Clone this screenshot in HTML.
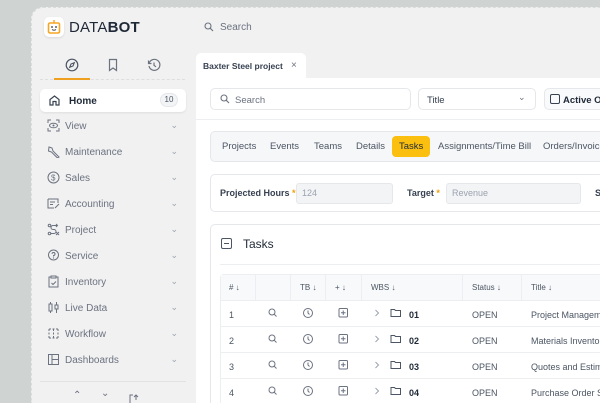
<!DOCTYPE html>
<html><head><meta charset="utf-8"><style>
*{box-sizing:border-box;margin:0;padding:0}
html,body{width:600px;height:403px;overflow:hidden}
body{background:#cfd3d2;font-family:"Liberation Sans",sans-serif;position:relative}
.abs{position:absolute}
.app{left:31px;top:7px;width:569px;height:396px;background:#f1f1f1;border-radius:12px 0 0 0;border-left:1px dashed #dcdcdc;border-top:1px dashed #dcdcdc}
.t{position:absolute;white-space:nowrap}
.mi{position:absolute;left:53px;width:132px;height:20px;font-size:10px;color:#6b7280}
.mi svg{position:absolute;left:0;top:2px}
.mi span{position:absolute;left:12px;top:4px}
.mi i{position:absolute;right:7px;top:3px;font-style:normal;font-size:9px;color:#9ca3af}
.box{position:absolute;background:#fff;border:1px solid #e5e7eb;border-radius:5px}
.tab{position:absolute;top:141px;font-size:9.5px;color:#4b5563;white-space:nowrap}
.row{position:absolute;left:220px;width:380px;height:26px;border-top:1px solid #eceef1;font-size:9px;color:#4b5563;white-space:nowrap;overflow:hidden}
.row .c{position:absolute;top:9px}
.vl{position:absolute;top:274px;width:1px;height:26px;background:#eceef1}
</style></head><body>
<div class="abs app"></div>
<div class="abs" style="left:44px;top:17px;width:20px;height:20px;background:#fff;border-radius:5px;box-shadow:0 1px 2px rgba(0,0,0,.1)"></div>
<svg class="abs" style="left:47px;top:19px" width="14" height="16" viewBox="0 0 14 16"><line x1="7" y1="1" x2="7" y2="4" stroke="#f5a623" stroke-width="1.4"/><rect x="1.5" y="4" width="11" height="10" rx="1.5" fill="none" stroke="#f5a623" stroke-width="1.6"/><circle cx="5" cy="8" r=".9" fill="#333"/><circle cx="9" cy="8" r=".9" fill="#333"/><path d="M5 10.5q2 1.4 4 0" stroke="#333" fill="none" stroke-width=".9"/></svg>
<div class="t" style="left:69px;top:19px;font-size:15px;color:#1f2937;letter-spacing:.2px">DATA<b>BOT</b></div>
<svg class="abs" style="left:204px;top:22px" width="10" height="10" viewBox="0 0 10 10"><circle cx="4" cy="4" r="3" fill="none" stroke="#6b7280" stroke-width="1.1"/><line x1="6.3" y1="6.3" x2="9" y2="9" stroke="#6b7280" stroke-width="1.1"/></svg>
<div class="t" style="left:220px;top:22px;font-size:10px;color:#6b7280">Search</div>
<svg class="abs" style="left:65px;top:58px" width="14" height="14" viewBox="0 0 14 14"><circle cx="7" cy="7" r="5.8" fill="none" stroke="#4b5563" stroke-width="1.2"/><path d="M9.3 4.7L8 8 4.7 9.3 6 6z" fill="none" stroke="#4b5563" stroke-width="1.1"/></svg>
<svg class="abs" style="left:107px;top:58px" width="12" height="14" viewBox="0 0 12 14"><path d="M2.5 1.5h7v11L6 10l-3.5 2.5z" fill="none" stroke="#6b7280" stroke-width="1.2"/></svg>
<svg class="abs" style="left:147px;top:58px" width="14" height="14" viewBox="0 0 14 14"><path d="M2.2 5A5.5 5.5 0 1 1 2 8" fill="none" stroke="#6b7280" stroke-width="1.2"/><path d="M1.5 2.5V5.5h3" fill="none" stroke="#6b7280" stroke-width="1.2"/><path d="M7 4.5V7.3l2 1.5" fill="none" stroke="#6b7280" stroke-width="1.2"/></svg>
<div class="abs" style="left:40px;top:79px;width:145px;border-top:1px dashed #dedede"></div>
<div class="abs" style="left:54px;top:78px;width:36px;height:2px;background:#f0a020"></div>
<div class="abs" style="left:40px;top:89px;width:146px;height:23px;background:#fff;border-radius:5px;box-shadow:0 1px 2px rgba(0,0,0,.08)"></div>
<svg class="abs" style="left:49px;top:95px" width="11" height="11" viewBox="0 0 11 11"><path d="M1 10V4.5L5.5 1 10 4.5V10H7V6.5H4V10z" fill="none" stroke="#374151" stroke-width="1.2"/></svg>
<div class="t" style="left:69px;top:96px;font-size:10px;color:#1f2937;font-weight:bold">Home</div>
<div class="abs" style="left:160px;top:93px;width:18px;height:14px;border-radius:7px;background:#f3f4f6;border:1px solid #e5e7eb;font-size:8px;color:#4b5563;text-align:center;line-height:12px">10</div>
<div class="mi" style="top:117px"><svg width="13" height="13" viewBox="0 0 13 13" style="left:-6px"><path d="M1 4V1h3M9 1h3v3M12 9v3H9M4 12H1V9" fill="none" stroke="#6b7280"/><ellipse cx="6.5" cy="6.5" rx="4" ry="2.3" fill="none" stroke="#6b7280"/><circle cx="6.5" cy="6.5" r="1" fill="#6b7280"/></svg><span>View</span><i>⌄</i></div>
<div class="mi" style="top:143px"><svg width="13" height="13" viewBox="0 0 13 13" style="left:-6px"><path d="M2 2l3 1 1 3 6 6-1.5 1-6-6-3-1z" fill="none" stroke="#6b7280"/></svg><span>Maintenance</span><i>⌄</i></div>
<div class="mi" style="top:169px"><svg width="13" height="13" viewBox="0 0 13 13" style="left:-6px"><circle cx="6.5" cy="6.5" r="5.5" fill="none" stroke="#6b7280"/><text x="4" y="9.5" font-size="8" fill="#6b7280" font-family="Liberation Sans">$</text></svg><span>Sales</span><i>⌄</i></div>
<div class="mi" style="top:195px"><svg width="13" height="13" viewBox="0 0 13 13" style="left:-6px"><path d="M1 2h10v4M1 2v9h6M3 5h5M3 7.5h3M8 11l4-4" fill="none" stroke="#6b7280"/></svg><span>Accounting</span><i>⌄</i></div>
<div class="mi" style="top:221px"><svg width="13" height="13" viewBox="0 0 13 13" style="left:-6px"><circle cx="2.5" cy="10.5" r="1.3" fill="none" stroke="#6b7280"/><circle cx="2.5" cy="2.5" r="1.3" fill="none" stroke="#6b7280"/><path d="M4 10.5h3a2 2 0 0 0 0-4H6a2 2 0 0 1 0-4h4M9 1l1.5 1.5L9 4M9 9l3 3M12 9l-3 3" fill="none" stroke="#6b7280"/></svg><span>Project</span><i>⌄</i></div>
<div class="mi" style="top:247px"><svg width="13" height="13" viewBox="0 0 13 13" style="left:-6px"><circle cx="6.5" cy="6" r="5" fill="none" stroke="#6b7280"/><path d="M5 4.8a1.5 1.5 0 1 1 1.5 1.7V7.5" fill="none" stroke="#6b7280"/><circle cx="6.5" cy="9" r=".6" fill="#6b7280"/></svg><span>Service</span><i>⌄</i></div>
<div class="mi" style="top:273px"><svg width="13" height="13" viewBox="0 0 13 13" style="left:-6px"><path d="M4 2H2v10h9V2H9M4 1h5v2H4zM4.5 8l1.5 1.5L9 6.5" fill="none" stroke="#6b7280"/></svg><span>Inventory</span><i>⌄</i></div>
<div class="mi" style="top:299px"><svg width="13" height="13" viewBox="0 0 13 13" style="left:-6px"><rect x="2" y="3" width="3" height="7" fill="none" stroke="#6b7280"/><rect x="8" y="4" width="3" height="4" fill="none" stroke="#6b7280"/><path d="M3.5 1v2M3.5 10v2M9.5 1v3M9.5 8v4" stroke="#6b7280"/></svg><span>Live Data</span><i>⌄</i></div>
<div class="mi" style="top:325px"><svg width="13" height="13" viewBox="0 0 13 13" style="left:-6px"><path d="M2 2h9M2 11h9M2 2v9M11 2v9M6.5 2v9" fill="none" stroke="#6b7280" stroke-dasharray="2 1.5"/></svg><span>Workflow</span><i>⌄</i></div>
<div class="mi" style="top:351px"><svg width="13" height="13" viewBox="0 0 13 13" style="left:-6px"><rect x="1.5" y="1.5" width="10" height="10" fill="none" stroke="#6b7280"/><path d="M5 1.5v10M5 6.5h6.5" stroke="#6b7280"/></svg><span>Dashboards</span><i>⌄</i></div>
<div class="abs" style="left:40px;top:381px;width:146px;border-top:1px solid #e2e2e2"></div>
<div class="t" style="left:73px;top:391px;font-size:10px;color:#6b7280;line-height:10px">⌃</div>
<div class="t" style="left:101px;top:389px;font-size:10px;color:#6b7280;line-height:10px">⌄</div>
<svg class="abs" style="left:129px;top:394px" width="10" height="9" viewBox="0 0 10 9"><path d="M4 1H1v8M7 1v5M5 3l2-2 2 2" fill="none" stroke="#6b7280"/></svg>
<div class="abs" style="left:196px;top:53px;width:110px;height:30px;background:#fff;border-radius:5px 5px 0 0"></div>
<div class="t" style="left:203px;top:61px;font-size:8.5px;color:#374151;font-weight:bold">Baxter Steel project</div>
<div class="t" style="left:291px;top:60px;font-size:10px;color:#6b7280">×</div>
<div class="abs" style="left:196px;top:78px;width:404px;height:325px;background:#fff"></div>
<div class="box" style="left:210px;top:88px;width:201px;height:22px"></div>
<svg class="abs" style="left:220px;top:94px" width="10" height="10" viewBox="0 0 10 10"><circle cx="4" cy="4" r="3" fill="none" stroke="#6b7280" stroke-width="1.1"/><line x1="6.3" y1="6.3" x2="9" y2="9" stroke="#6b7280" stroke-width="1.1"/></svg>
<div class="t" style="left:235px;top:95px;font-size:9.5px;color:#6b7280">Search</div>
<div class="box" style="left:418px;top:88px;width:118px;height:22px"></div>
<div class="t" style="left:427px;top:95px;font-size:9.5px;color:#374151">Title</div>
<div class="t" style="left:518px;top:92px;font-size:9px;color:#6b7280">⌄</div>
<div class="box" style="left:544px;top:88px;width:70px;height:22px;background:#f9fafb"></div>
<div class="abs" style="left:550px;top:94px;width:10px;height:10px;border:1.2px solid #374151;border-radius:2px"></div>
<div class="t" style="left:563px;top:95px;font-size:9.5px;color:#1f2937;font-weight:bold">Active Or</div>
<div class="abs" style="left:196px;top:119px;width:404px;border-top:1px solid #eceef1"></div>
<div class="box" style="left:210px;top:131px;width:400px;height:31px;background:#f6f7f9"></div>
<div class="tab" style="left:222px">Projects</div>
<div class="tab" style="left:270px">Events</div>
<div class="tab" style="left:314px">Teams</div>
<div class="tab" style="left:356px">Details</div>
<div class="abs" style="left:392px;top:136px;width:38px;height:21px;background:#fbbf10;border-radius:4px"></div>
<div class="tab" style="left:399px;color:#1f2937">Tasks</div>
<div class="tab" style="left:438px">Assignments/Time Bill</div>
<div class="tab" style="left:543px">Orders/Invoices</div>
<div class="box" style="left:210px;top:174px;width:400px;height:38px"></div>
<div class="t" style="left:220px;top:188px;font-size:9px;color:#374151;font-weight:bold">Projected Hours <span style="color:#f59e0b">*</span></div>
<div class="abs" style="left:296px;top:183px;width:97px;height:21px;background:#f3f4f6;border:1px solid #e5e7eb;border-radius:3px"></div>
<div class="t" style="left:302px;top:188px;font-size:9px;color:#9ca3af">124</div>
<div class="t" style="left:407px;top:188px;font-size:9px;color:#374151;font-weight:bold">Target <span style="color:#f59e0b">*</span></div>
<div class="abs" style="left:446px;top:183px;width:135px;height:21px;background:#f3f4f6;border:1px solid #e5e7eb;border-radius:3px"></div>
<div class="t" style="left:452px;top:188px;font-size:9px;color:#9ca3af">Revenue</div>
<div class="t" style="left:595px;top:188px;font-size:9px;color:#374151;font-weight:bold">S</div>
<div class="box" style="left:210px;top:224px;width:400px;height:179px;border-bottom:none;border-radius:5px 5px 0 0"></div>
<div class="abs" style="left:221px;top:238px;width:11px;height:11px;border:1.2px solid #4b5563;border-radius:2px"></div>
<div class="abs" style="left:224px;top:243px;width:5px;height:1.2px;background:#4b5563"></div>
<div class="t" style="left:243px;top:237px;font-size:12px;color:#1f2937">Tasks</div>
<div class="abs" style="left:220px;top:264px;width:380px;border-top:1px solid #eceef1"></div>
<div class="abs" style="left:220px;top:274px;width:380px;height:129px;border:1px solid #eceef1;border-right:none;border-bottom:none;border-radius:4px 0 0 0"></div>
<div class="abs" style="left:221px;top:275px;width:379px;height:25px;background:#f8f9fa"></div>
<div class="vl" style="left:255px"></div><div class="vl" style="left:290px"></div><div class="vl" style="left:325px"></div><div class="vl" style="left:361px"></div><div class="vl" style="left:462px"></div><div class="vl" style="left:521px"></div>
<div class="t" style="left:229px;top:283px;font-size:8px;color:#4b5563">#&nbsp;↓</div>
<div class="t" style="left:300px;top:283px;font-size:8px;color:#4b5563">TB&nbsp;↓</div>
<div class="t" style="left:335px;top:283px;font-size:8px;color:#4b5563">+&nbsp;↓</div>
<div class="t" style="left:371px;top:283px;font-size:8px;color:#4b5563">WBS&nbsp;↓</div>
<div class="t" style="left:472px;top:283px;font-size:8px;color:#4b5563">Status&nbsp;↓</div>
<div class="t" style="left:531px;top:283px;font-size:8px;color:#4b5563">Title&nbsp;↓</div>
<div class="row" style="top:300px"><span class="c" style="left:9px">1</span><span class="c" style="left:252px">OPEN</span><span class="c" style="left:311px">Project Management</span><b class="c" style="left:189px;color:#1f2937">01</b></div>
<div class="row" style="top:326px"><span class="c" style="left:9px">2</span><span class="c" style="left:252px">OPEN</span><span class="c" style="left:311px">Materials Inventory</span><b class="c" style="left:189px;color:#1f2937">02</b></div>
<div class="row" style="top:352px"><span class="c" style="left:9px">3</span><span class="c" style="left:252px">OPEN</span><span class="c" style="left:311px">Quotes and Estimates</span><b class="c" style="left:189px;color:#1f2937">03</b></div>
<div class="row" style="top:378px;height:25px"><span class="c" style="left:9px">4</span><span class="c" style="left:252px">OPEN</span><span class="c" style="left:311px">Purchase Order Setup</span><b class="c" style="left:189px;color:#1f2937">04</b></div>
<svg class="abs" style="left:0;top:0" width="600" height="403">
<defs>
<g id="ic">
<circle cx="272" cy="312" r="3" fill="none" stroke="#6b7280"/><line x1="274.2" y1="314.2" x2="276.5" y2="316.5" stroke="#6b7280"/>
<circle cx="308" cy="313" r="4.5" fill="none" stroke="#6b7280"/><path d="M308 310.5V313l1.5 1.5" fill="none" stroke="#6b7280"/>
<rect x="339" y="308.5" width="8.5" height="8.5" fill="none" stroke="#6b7280" rx="1"/><path d="M343.25 310.5v4.5M341 312.75h4.5" stroke="#6b7280"/>
<path d="M375.5 310l3 3-3 3" fill="none" stroke="#9ca3af"/>
<path d="M391 309.5h3.5l1 1h5v6h-9.5z" fill="none" stroke="#4b5563"/>
</g></defs>
<use href="#ic"/><use href="#ic" y="26"/><use href="#ic" y="52"/><use href="#ic" y="78"/>
</svg>
</body></html>
